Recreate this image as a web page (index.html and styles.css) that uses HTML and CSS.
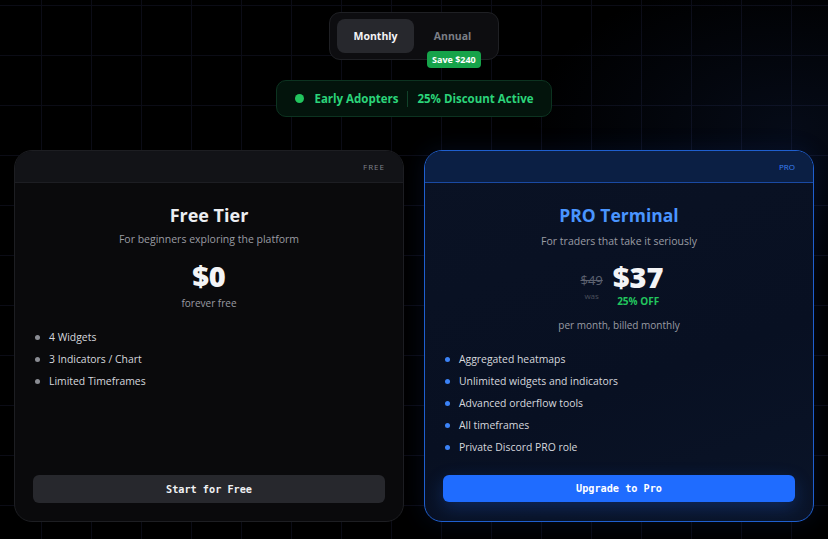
FILE: index.html
```html
<!DOCTYPE html>
<html lang="en">
<head>
    <meta charset="UTF-8">
    <meta name="viewport" content="width=device-width, initial-scale=1.0">
    <title>Pricing</title>
    <link rel="stylesheet" href="styles.css">
</head>
<body>
    <div class="top">
        <div class="billing">
            <button class="billing-btn active">Monthly</button>
            <button class="billing-btn">Annual</button>
            <span class="save">Save $240</span>
        </div>

        <div class="promo">
            <span class="promo-dot"></span>
            <span class="promo-label">Early Adopters</span>
            <span class="promo-sep"></span>
            <span class="promo-label">25% Discount Active</span>
        </div>
    </div>

    <div class="plans">
        <!-- free -->
        <div class="card">
            <div class="card-head"><span class="tag">FREE</span></div>
            <div class="card-body">
                <h2 class="plan-name">Free Tier</h2>
                <p class="plan-desc">For beginners exploring the platform</p>
                <div class="price free-price">$0</div>
                <p class="price-note forever">forever free</p>
                <ul class="features free-features">
                    <li>4 Widgets</li>
                    <li>3 Indicators / Chart</li>
                    <li>Limited Timeframes</li>
                </ul>
                <button class="cta">Start for Free</button>
            </div>
        </div>

        <!-- pro -->
        <div class="card pro">
            <div class="card-head"><span class="tag">PRO</span></div>
            <div class="card-body">
                <h2 class="plan-name">PRO Terminal</h2>
                <p class="plan-desc">For traders that take it seriously</p>
                <div class="price-row">
                    <div class="old">
                        <span class="old-price">$49</span>
                        <span class="was">was</span>
                    </div>
                    <div class="new">
                        <span class="price">$37</span>
                        <span class="off">25% OFF</span>
                    </div>
                </div>
                <p class="price-note billed">per month, billed monthly</p>
                <ul class="features">
                    <li>Aggregated heatmaps</li>
                    <li>Unlimited widgets and indicators</li>
                    <li>Advanced orderflow tools</li>
                    <li>All timeframes</li>
                    <li>Private Discord PRO role</li>
                </ul>
                <button class="cta">Upgrade to Pro</button>
            </div>
        </div>
    </div>
</body>
</html>
```

FILE: styles.css
```css
* {
    margin: 0;
    padding: 0;
    box-sizing: border-box;
}

html, body {
    width: 100%;
    height: 100%;
}

body {
    background-color: #000;
    background-image:
        radial-gradient(ellipse 260px 160px at 790px 130px, rgba(30, 60, 130, 0.18), transparent),
        linear-gradient(to right, #0b0c16 1px, transparent 1px),
        linear-gradient(to bottom, #0b0c16 1px, transparent 1px);
    background-size: 100% 100%, 50px 50px, 50px 50px;
    background-position: 0 0, 41px 5px, 41px 5px;
    font-family: "Open Sans", "Noto Sans", sans-serif;
    color: #e5e7eb;
    overflow: hidden;
}

.top {
    display: flex;
    flex-direction: column;
    align-items: center;
    padding-top: 12px;
}

/* billing toggle */
.billing {
    position: relative;
    display: flex;
    padding: 6px 7px;
    background: #0d0d10;
    border: 1px solid #1f2024;
    border-radius: 11px;
}

.billing-btn {
    width: 77px;
    height: 34px;
    border: none;
    border-radius: 8px;
    background: transparent;
    color: #7b7e86;
    font-family: inherit;
    font-size: 10.5px;
    font-weight: 700;
}

.billing-btn.active {
    background: #27282d;
    color: #f3f4f6;
}

.save {
    position: absolute;
    left: 97px;
    top: 38px;
    padding: 2px 5px;
    background: #16a34a;
    color: #fff;
    font-size: 9px;
    font-weight: 700;
    border-radius: 4px;
    line-height: 13px;
}

/* promo pill */
.promo {
    display: flex;
    align-items: center;
    gap: 9px;
    margin-top: 20px;
    height: 37px;
    padding: 0 17px 0 18px;
    background: #03140c;
    border: 1px solid #0c3320;
    border-radius: 10px;
}

.promo-dot {
    width: 9px;
    height: 9px;
    border-radius: 50%;
    background: #22c55e;
    margin-right: 1px;
}

.promo-label {
    color: #2bd47a;
    font-size: 11.5px;
    font-weight: 700;
}

.promo-sep {
    width: 1px;
    height: 16px;
    background: #11422a;
}

/* cards */
.plans {
    display: flex;
    gap: 20px;
    padding: 0 14px;
    margin-top: 33px;
}

.card {
    flex: 1;
    height: 372px;
    display: flex;
    flex-direction: column;
    background: #0a0a0c;
    border: 1px solid #1d1e22;
    border-radius: 18px;
    overflow: hidden;
}

.card-head {
    height: 32px;
    flex-shrink: 0;
    display: flex;
    align-items: center;
    justify-content: flex-end;
    padding: 0 18px;
    background: #121317;
    border-bottom: 1px solid #1d1e23;
}

.tag {
    font-size: 8px;
    letter-spacing: 1px;
    color: #7e8189;
}

.card-body {
    flex: 1;
    display: flex;
    flex-direction: column;
    align-items: center;
    padding: 19px 18px 18px;
}

.plan-name {
    font-size: 18px;
    font-weight: 700;
    line-height: 26px;
    color: #eceef2;
}

.plan-desc {
    margin-top: 3px;
    font-size: 10.5px;
    line-height: 16px;
    color: #9a9ca3;
}

.price {
    font-size: 29px;
    font-weight: 800;
    line-height: 34px;
    color: #f3f4f6;
}

.free-price {
    margin-top: 12px;
}

.price-note {
    font-size: 10px;
    line-height: 16px;
    color: #9a9ca3;
}

.forever {
    margin-top: 2px;
}

.features {
    list-style: none;
    align-self: stretch;
    margin-top: 15px;
    padding-left: 1px;
}

.features li {
    position: relative;
    padding-left: 15px;
    font-size: 10.4px;
    line-height: 22px;
    color: #d6d8de;
}

.features li::before {
    content: "";
    position: absolute;
    left: 1px;
    top: 8.5px;
    width: 5px;
    height: 5px;
    border-radius: 50%;
    background: #8a8c93;
}

.cta {
    margin-top: auto;
    align-self: stretch;
    height: 28px;
    border: none;
    border-radius: 6px;
    background: #27282d;
    color: #f1f2f4;
    font-family: "DejaVu Sans Mono", "Liberation Mono", monospace;
    font-size: 10.2px;
    font-weight: 700;
}

/* pro */
.card.pro {
    border: 1.5px solid #1f5fcf;
    background: linear-gradient(160deg, #0a1224 0%, #081022 60%, #0a1428 100%);
    box-shadow: 0 0 24px rgba(30, 90, 220, 0.12);
}

.pro .card-body {
    padding-bottom: 19px;
}

.pro .card-head {
    background: #0b1f44;
    border-bottom: 1px solid #1a4aa3;
}

.pro .tag {
    color: #3b82f6;
    letter-spacing: 0;
}

.pro .plan-name {
    font-size: 17.5px;
    color: #4a95ff;
}

.pro .plan-desc {
    margin-top: 5px;
}

.price-row {
    display: flex;
    align-items: flex-start;
    gap: 10px;
    margin-top: 15px;
    margin-left: 6px;
}

.old {
    display: flex;
    flex-direction: column;
    align-items: center;
    padding-top: 7px;
}

.old-price {
    font-size: 13px;
    line-height: 18px;
    color: #5d6270;
    text-decoration: line-through;
}

.was {
    margin-top: 1px;
    font-size: 8px;
    line-height: 12px;
    color: #4a4f5b;
}

.new {
    display: flex;
    flex-direction: column;
    align-items: center;
}

.new .price {
    line-height: 26px;
}

.off {
    margin-top: 4px;
    font-size: 10px;
    font-weight: 700;
    line-height: 14px;
    color: #22c55e;
}

.billed {
    margin-top: 9px;
}

.pro .features {
    margin-top: 15px;
}

.pro .features li::before {
    background: #3b82f6;
}

.pro .cta {
    height: 27px;
    background: #1f6cff;
    color: #fff;
    box-shadow: 0 6px 18px rgba(31, 108, 255, 0.25);
}
```
